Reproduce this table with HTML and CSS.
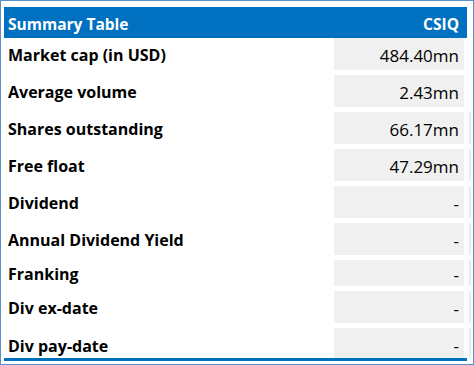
FILE: index.html
```html
<!DOCTYPE html>
<html>
<head>
<meta charset="utf-8">
<link rel="stylesheet" href="styles.css">
</head>
<body>
<div class="frame">
  <div class="table">
    <div class="head">
      <span class="head-title">Summary Table</span>
      <span class="head-sym">CSIQ</span>
    </div>
    <div class="row"><div class="label">Market cap (in USD)</div><div class="value">484.40mn</div></div>
    <div class="row"><div class="label">Average volume</div><div class="value">2.43mn</div></div>
    <div class="row ghost"><div class="label">Shares outstanding</div><div class="value">66.17mn</div></div>
    <div class="row ghost"><div class="label">Free float</div><div class="value">47.29mn</div></div>
    <div class="row ghost"><div class="label">Dividend</div><div class="value">-</div></div>
    <div class="row ghost"><div class="label">Annual Dividend Yield</div><div class="value">-</div></div>
    <div class="row ghost short"><div class="label">Franking</div><div class="value">-</div></div>
    <div class="row ghost"><div class="label">Div ex-date</div><div class="value">-</div></div>
    <div class="row ghost last"><div class="label">Div pay-date</div><div class="value">-</div></div>
  </div>
</div>
</body>
</html>
```
FILE: styles.css
```css
html, body {
  margin: 0;
  padding: 0;
  background: #ffffff;
}
.frame {
  width: 474px;
  height: 365px;
  box-sizing: border-box;
  border: 1px solid #5b8fc9;
  padding: 6px 6px 0 3px;
  font-family: "Open Sans", "Noto Sans", sans-serif;
  color: #000;
}
.table {
  width: 463px;
  display: flex;
  flex-direction: column;
  gap: 5px;
  border-bottom: 3px solid #0070c0;
}
.head {
  height: 31px;
  background: #0070c0;
  color: #fff;
  font-weight: bold;
  font-size: 15.5px;
  display: flex;
  align-items: center;
  justify-content: space-between;
  padding: 2px 8px 0 4px;
  box-sizing: border-box;
  margin-bottom: -5px;
}
.row {
  height: 32px;
  display: flex;
  align-items: center;
  position: relative;
}
.row.short { height: 26px; }
.row.last { height: 30px; padding-top: 3px; box-sizing: border-box; }
.label {
  flex: 1;
  padding-left: 4px;
  font-weight: bold;
  font-size: 16px;
  padding-top: 2px;
}
.value {
  width: 130px;
  height: 100%;
  margin-right: 3px;
  background: #f0f0f0;
  display: flex;
  align-items: center;
  justify-content: flex-end;
  padding-right: 5px;
  padding-top: 2px;
  box-sizing: border-box;
  font-size: 17px;
}
.row.last .value { height: calc(100% + 3px); margin-top: -3px; padding-top: 5px; }
.ghost::after {
  content: "";
  position: absolute;
  right: -4px;
  top: 0;
  bottom: 0;
  width: 2px;
  background: #ececec;
}
```
